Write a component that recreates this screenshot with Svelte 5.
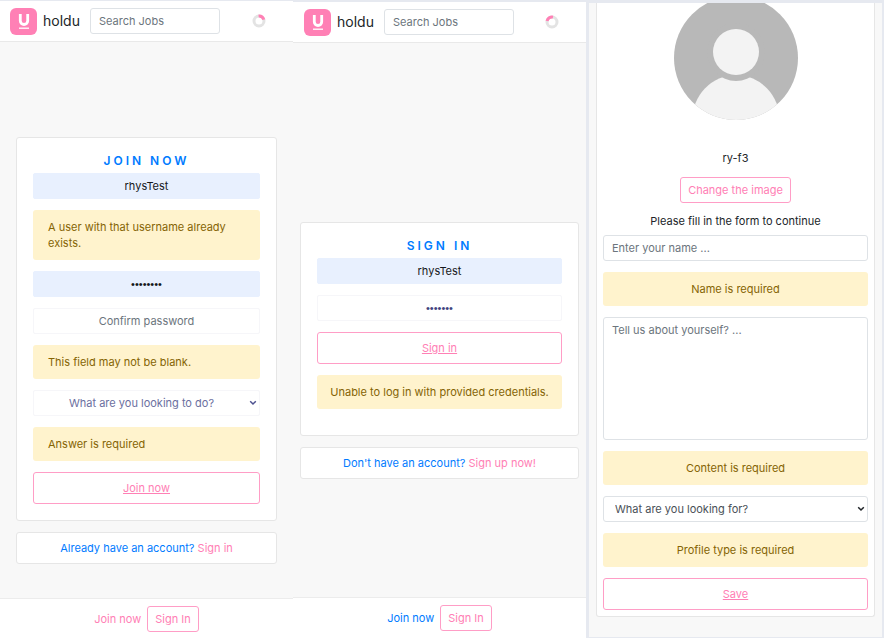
<script>
  let joinName = $state('rhysTest');
  let joinPassword = $state('password');
  let loginName = $state('rhysTest');
  let loginPassword = $state('passwor');
</script>

{#snippet navbar(id, turn)}
  <header class="nav">
    <a class="brand" href="#home">
      <svg class="logo" viewBox="0 0 27 27" aria-hidden="true">
        <rect width="27" height="27" rx="6" fill="#ff80b5" />
        <path d="M10.3 6v6.8a3.7 3.7 0 0 0 7.4 0V6" fill="none" stroke="#fff" stroke-width="2.8" />
        <path d="M9 20.2h10" stroke="#fff" stroke-width="1.3" />
      </svg>
      <span>holdu</span>
    </a>
    <input class="field search" {id} type="text" placeholder="Search Jobs" aria-label="Search Jobs" />
    <svg class="spinner" viewBox="0 0 14 14" aria-hidden="true">
      <circle cx="7" cy="7" r="5" fill="none" stroke="#e3e3e3" stroke-width="3" />
      <path d={turn} fill="none" stroke="#ff80b5" stroke-width="3" />
    </svg>
  </header>
{/snippet}

{#snippet chevron()}
  <svg class="chevron" viewBox="0 0 8 6" aria-hidden="true">
    <path d="M1.2 1.2 4 4l2.8-2.8" fill="none" stroke="currentColor" stroke-width="1.5" />
  </svg>
{/snippet}

{#snippet bottomBar(active)}
  <footer class="bottom">
    <a class={active ? 'pink' : 'blue'} href="#join">Join now</a>
    <button class="outline small" type="button">Sign In</button>
  </footer>
{/snippet}

<div class="board">
  <section class="panel join">
    {@render navbar('search-join', 'M6.6 2A5 5 0 0 1 11.8 5.6')}
    <main class="content">
      <form class="card auth">
        <h1>JOIN NOW</h1>
        <div class="stack">
          <input class="field filled" type="text" aria-label="Username" bind:value={joinName} />
          <div class="alert" role="alert">A user with that username already exists.</div>
          <input class="field filled secret" type="password" aria-label="Password" bind:value={joinPassword} />
          <input class="field plain" type="password" aria-label="Confirm password" placeholder="Confirm password" />
          <div class="alert" role="alert">This field may not be blank.</div>
          <div class="picker tinted">
            <select class="field plain choice" aria-label="What are you looking to do?">
              <option>What are you looking to do?</option>
            </select>
            {@render chevron()}
          </div>
          <div class="alert" role="alert">Answer is required</div>
          <button class="outline wide" type="button">Join now</button>
        </div>
      </form>
      <p class="card switch">Already have an account? <a class="pink" href="#signin">Sign in</a></p>
    </main>
    {@render bottomBar(true)}
  </section>

  <section class="panel login">
    {@render navbar('search-login', 'M2.1 6A5 5 0 0 1 8 2.1')}
    <main class="content">
      <form class="card auth">
        <h1>SIGN IN</h1>
        <div class="stack">
          <input class="field filled" type="text" aria-label="Username" bind:value={loginName} />
          <input class="field plain secret" type="password" aria-label="Password" bind:value={loginPassword} />
          <button class="outline wide" type="button">Sign in</button>
          <div class="alert center" role="alert">Unable to log in with provided credentials.</div>
        </div>
      </form>
      <p class="card switch">Don't have an account? <a class="pink" href="#signup">Sign up now!</a></p>
    </main>
    {@render bottomBar(false)}
  </section>

  <section class="panel profile">
    <form class="card details">
      <svg class="avatar" viewBox="0 0 124 117" role="img" aria-label="Profile picture">
        <clipPath id="round"><circle cx="62" cy="55" r="62" /></clipPath>
        <g clip-path="url(#round)">
          <rect y="-8" width="124" height="126" fill="#b8b8b8" />
          <ellipse cx="62" cy="118" rx="44" ry="46" fill="#f3f3f3" />
          <circle cx="62" cy="49" r="29" fill="#b8b8b8" />
          <circle cx="62" cy="49" r="23" fill="#f3f3f3" />
        </g>
      </svg>
      <p class="user">ry-f3</p>
      <button class="outline small" type="button">Change the image</button>
      <p class="hint">Please fill in the form to continue</p>
      <div class="stack">
        <input class="field" type="text" aria-label="Name" placeholder="Enter your name ..." />
        <div class="alert center" role="alert">Name is required</div>
        <textarea class="field" aria-label="About yourself" placeholder="Tell us about yourself? ..."></textarea>
        <div class="alert center" role="alert">Content is required</div>
        <div class="picker">
          <select class="field" aria-label="What are you looking for?">
            <option>What are you looking for?</option>
          </select>
          {@render chevron()}
        </div>
        <div class="alert center" role="alert">Profile type is required</div>
        <button class="outline wide" type="button">Save</button>
      </div>
    </form>
  </section>
</div>

<style>
  :global(body) {
    margin: 0;
    background: #fff;
  }

  .board {
    display: grid;
    grid-template-columns: 293fr 295fr 296fr;
    min-height: 100vh;
    font-family: Inter, "Open Sans", sans-serif;
    font-size: 11px;
    line-height: 16px;
    color: #212529;
  }

  .board * {
    box-sizing: border-box;
  }

  .panel {
    display: flex;
    flex-direction: column;
    min-width: 0;
    background: #f8f8f8;
    border: 0 solid #e6e9f0;
  }

  .join {
    border-top-width: 1px;
  }

  .login {
    border-width: 2px 2px 1px 0;
  }

  .profile {
    border-width: 3px 2px 2px 1px;
    padding: 0 7px 20px;
  }

  .nav {
    display: flex;
    align-items: center;
    height: 41px;
    padding: 0 27px 0 10px;
    background: #fff;
    border-bottom: 1px solid #e9e9e9;
  }

  .brand {
    display: flex;
    align-items: center;
    gap: 6px;
    margin-right: 10px;
    color: #212529;
    font-size: 14px;
    text-decoration: none;
  }

  .login .nav {
    padding-left: 11px;
  }

  .logo {
    width: 27px;
    height: 27px;
  }

  .spinner {
    width: 14px;
    height: 14px;
    margin-left: auto;
  }

  .field {
    display: block;
    width: 100%;
    height: 26px;
    margin: 0;
    padding: 4px 8px;
    border: 1px solid #dee2e6;
    border-radius: 3px;
    background-color: #fff;
    color: #495057;
    font: inherit;
    outline: 0;
  }

  .field::placeholder {
    color: #6c757d;
    opacity: 1;
  }

  .search {
    width: 130px;
  }

  .filled,
  .plain {
    border-color: #f6f6f9;
    border-radius: 2px;
    color: #6b6fa0;
    text-align: center;
  }

  .filled {
    border-color: #e8f0fe;
    background-color: #e8f0fe;
    color: #16181b;
  }

  .secret {
    font-family: "Liberation Sans", sans-serif;
  }

  .plain.secret {
    color: #3f4380;
  }

  .picker {
    position: relative;
    color: #212529;
  }

  .tinted {
    color: #4d5190;
  }

  .chevron {
    position: absolute;
    top: 10px;
    right: 3px;
    width: 8px;
    height: 6px;
    pointer-events: none;
  }

  select.field {
    appearance: none;
    padding: 0 16px 0 11px;
  }

  select.choice {
    padding: 0 14px 0 4px;
  }

  textarea.field {
    height: 123px;
    resize: none;
  }

  .content {
    flex: 1;
    padding: 95px 16px 0;
  }

  .login .content {
    padding: 179px 7px 0;
  }

  .card {
    margin: 0;
    border: 1px solid #e6e6e6;
    border-radius: 3px;
    background: #fff;
  }

  .auth {
    padding: 14px 16px 16px;
  }

  .login .auth {
    padding-bottom: 26px;
  }

  h1 {
    margin: 0 0 4px;
    color: #007bff;
    font-size: 12px;
    font-weight: 600;
    line-height: 17px;
    letter-spacing: 3px;
    text-align: center;
  }

  .stack {
    display: grid;
    gap: 11px;
  }

  .alert {
    padding: 9px 15px;
    border-radius: 3px;
    background: #fff3cd;
    color: #856404;
  }

  .center {
    padding: 9px 4px;
    text-align: center;
  }

  .outline {
    border: 1px solid #ff9dc6;
    border-radius: 3px;
    background: #fff;
    color: #ff80b5;
    font: inherit;
    cursor: pointer;
  }

  .small {
    height: 26px;
    padding: 0 7px;
  }

  .wide {
    height: 32px;
    text-decoration: underline;
  }

  .switch {
    margin-top: 11px;
    padding: 7px 4px;
    color: #007bff;
    text-align: center;
  }

  .pink {
    color: #ff80b5;
    text-decoration: none;
  }

  .blue {
    color: #007bff;
    text-decoration: none;
  }

  .bottom {
    display: flex;
    align-items: center;
    justify-content: center;
    gap: 6px;
    height: 41px;
    padding-bottom: 1px;
    background: #fff;
    border-top: 1px solid #ececec;
  }

  .details {
    display: flex;
    flex: 1;
    flex-direction: column;
    align-items: center;
    padding: 0 6px 6px;
    border-top: 0;
    border-radius: 0 0 3px 3px;
  }

  .details .stack {
    width: 100%;
  }

  .avatar {
    width: 124px;
    height: 117px;
  }

  .user {
    margin: 30px 0 11px;
  }

  .hint {
    margin: 10px 0 6px;
  }
</style>
